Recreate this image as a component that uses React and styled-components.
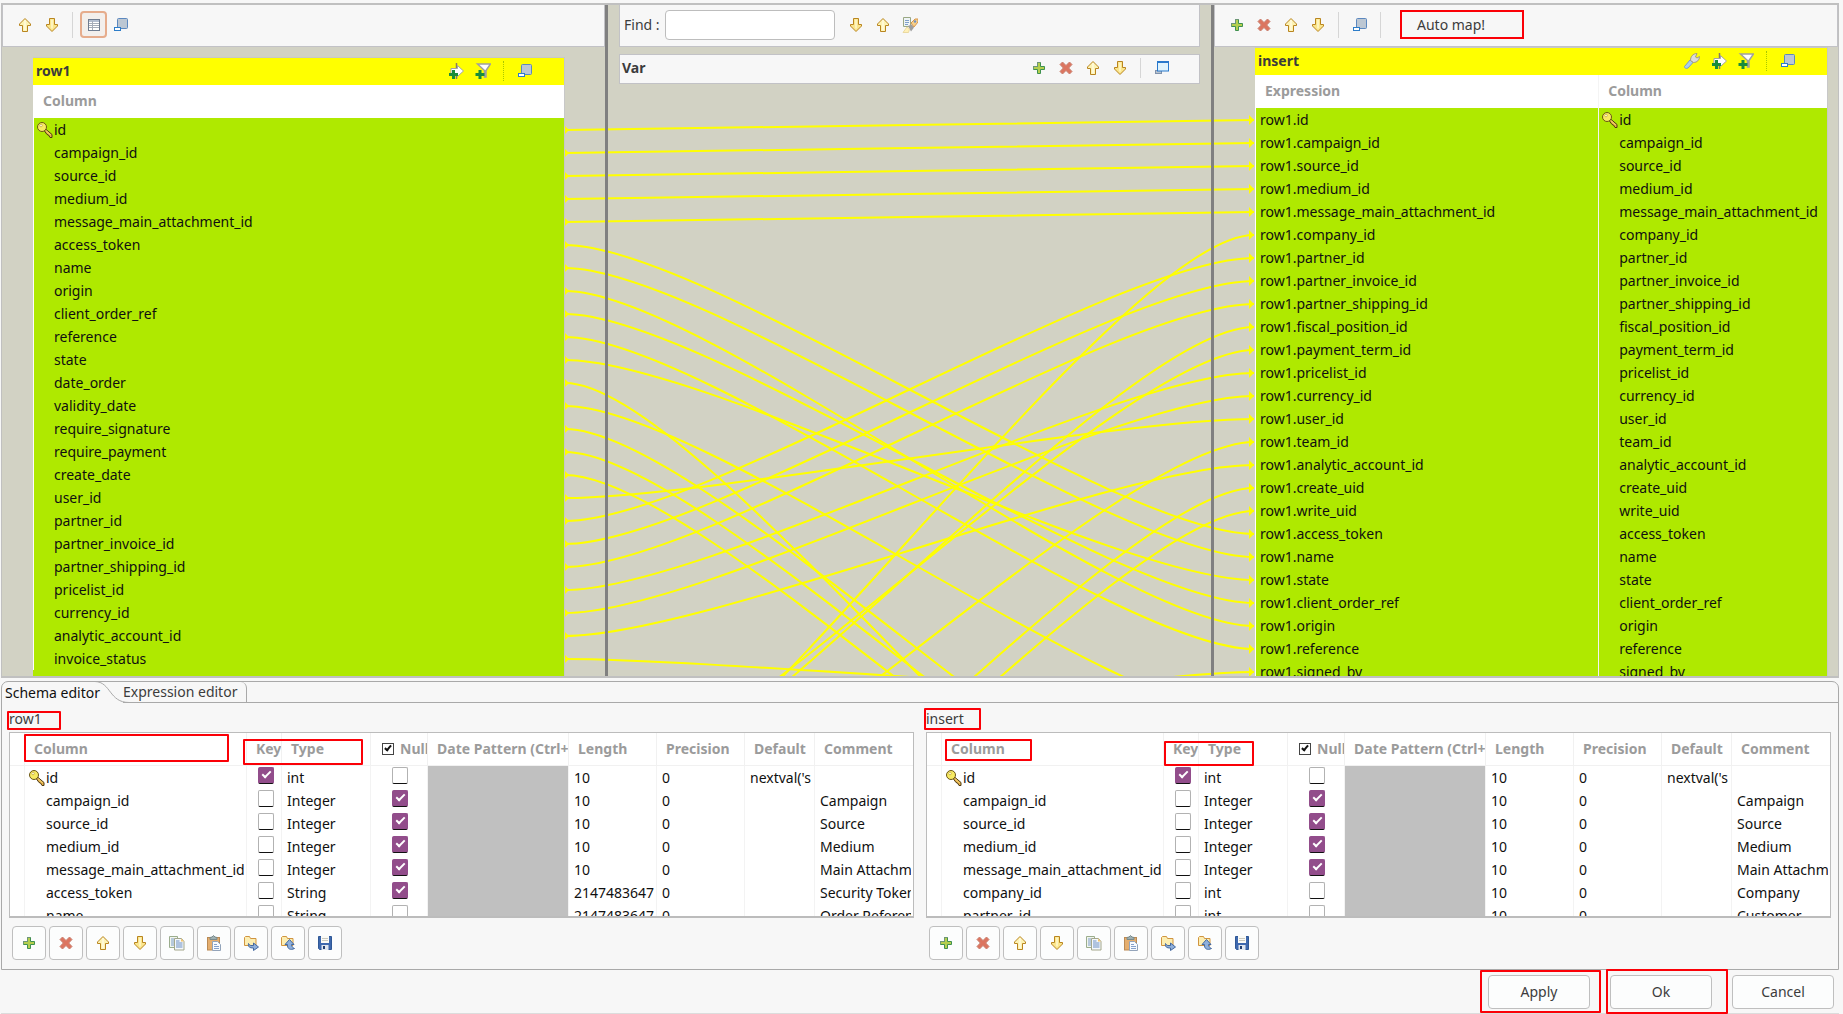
import React from "react";
import styled, { createGlobalStyle, css } from "styled-components";

const GlobalStyle = createGlobalStyle`
  *, *::before, *::after { box-sizing: border-box; }
  body {
    margin: 0;
    background: #f7f7f7;
    color: #3c3c3c;
    font: 14px/20px "Noto Sans", "Open Sans", sans-serif;
  }
  button, input { font: inherit; color: inherit; margin: 0; }
  table { border-collapse: separate; border-spacing: 0; }
`;

/* ---------- data ---------- */

const sourceColumns = [
  "id", "campaign_id", "source_id", "medium_id", "message_main_attachment_id",
  "access_token", "name", "origin", "client_order_ref", "reference", "state",
  "date_order", "validity_date", "require_signature", "require_payment",
  "create_date", "user_id", "partner_id", "partner_invoice_id",
  "partner_shipping_id", "pricelist_id", "currency_id", "analytic_account_id",
  "invoice_status",
];

const targetColumns = [
  "id", "campaign_id", "source_id", "medium_id", "message_main_attachment_id",
  "company_id", "partner_id", "partner_invoice_id", "partner_shipping_id",
  "fiscal_position_id", "payment_term_id", "pricelist_id", "currency_id",
  "user_id", "team_id", "analytic_account_id", "create_uid", "write_uid",
  "access_token", "name", "state", "client_order_ref", "origin", "reference",
  "signed_by",
];

/* [source row, target row] */
const links = [
  [0, 0], [1, 1], [2, 2], [3, 3], [4, 4], [5, 18], [6, 19], [7, 22], [8, 21],
  [9, 23], [10, 20], [11, 36], [12, 26], [13, 32], [14, 33], [15, 34],
  [16, 13], [17, 6], [18, 7], [19, 8], [20, 11], [21, 12], [22, 15], [23, 25],
  [31, 5], [30, 9], [29, 10], [32, 14], [37, 16], [38, 17], [27, 24],
];

const leftSchema = [
  { name: "id", pk: true, type: "int", nullable: false, length: "10", def: "nextval('s", comment: "" },
  { name: "campaign_id", type: "Integer", nullable: true, length: "10", comment: "Campaign" },
  { name: "source_id", type: "Integer", nullable: true, length: "10", comment: "Source" },
  { name: "medium_id", type: "Integer", nullable: true, length: "10", comment: "Medium" },
  { name: "message_main_attachment_id", type: "Integer", nullable: true, length: "10", comment: "Main Attachment" },
  { name: "access_token", type: "String", nullable: true, length: "2147483647", comment: "Security Token" },
  { name: "name", type: "String", nullable: false, length: "2147483647", comment: "Order Reference" },
];

const rightSchema = [
  ...leftSchema.slice(0, 5),
  { name: "company_id", type: "int", nullable: false, length: "10", comment: "Company" },
  { name: "partner_id", type: "int", nullable: false, length: "10", comment: "Customer" },
];

/* ---------- icons ---------- */

const Svg = styled.svg`
  display: block;
  width: 16px;
  height: 16px;
  flex: none;
`;

const Icon = ({ children }) => (
  <Svg viewBox="0 0 16 16" aria-hidden="true">{children}</Svg>
);

const UpIcon = () => (
  <Icon>
    <path d="M8 1.5 13.5 7v1.5h-3v6h-5v-6h-3V7z" fill="#fdf3b4" stroke="#b9851f" strokeLinejoin="round" />
    <path d="M8 3v10.5" stroke="#fffbe0" strokeWidth="1.5" />
  </Icon>
);
const DownIcon = () => (
  <Icon>
    <path d="M8 14.5 13.5 9V7.500h-3v-6h-5v6h-3V9z" fill="#fbe68c" stroke="#b9851f" strokeLinejoin="round" />
    <path d="M8 2.500v9" stroke="#fff8cf" strokeWidth="1.5" />
  </Icon>
);
const AddIcon = () => (
  <Icon>
    <path d="M6.500 2.500h3v4h4v3h-4v4h-3v-4h-4v-3h4z" fill="#b5cf4e" stroke="#3f9150" />
    <path d="M2.500 9v-2.500h4v-4h3" fill="none" stroke="#6f9578" />
  </Icon>
);
const DeleteIcon = () => (
  <Icon>
    <path d="M4.500 2 8 5.500 11.500 2 14 4.500 10.700 8 14 11.500 11.500 14 8 10.500 4.500 14 2 11.500 5.300 8 2 4.500z" fill="#dc7560" stroke="#c9806f" strokeLinejoin="round" />
  </Icon>
);
const RestoreIcon = () => (
  <Icon>
    <rect x="4.500" y="1.500" width="10" height="10" rx="1" fill="#bcc7d3" stroke="#5c88bf" />
    <rect x="1.500" y="10.500" width="6" height="3" fill="#fff" stroke="#2d7dc9" />
  </Icon>
);
const MaximizeIcon = () => (
  <Icon>
    <rect x="1.500" y="10.500" width="6" height="3" fill="#b9c3cf" stroke="#8192ab" />
    <rect x="3.500" y="1.500" width="11" height="9.500" fill="#dff3fd" stroke="#2878cc" />
    <path d="M4 2.500h10" stroke="#2878cc" />
  </Icon>
);
const GridIcon = () => (
  <Icon>
    <rect x="2.500" y="2.500" width="11" height="11" fill="#fff" stroke="#6f7c90" />
    <path d="M3 4h10" stroke="#9aa9c0" strokeWidth="1.500" />
    <path d="M3 6.500h10M3 8.500h10M3 10.500h10M6.500 4v9" stroke="#a6adb8" />
  </Icon>
);
const FindIcon = () => (
  <Icon>
    <path d="M1.500 .5v9h7v-9z" fill="#eef4f6" stroke="#9aa884" />
    <path d="M3 3.500h4M3 5.500h4M3 7.500h3" stroke="#7fa0cb" />
    <path d="m9 6 4-4h3v3l-4 5z" fill="#f7d08a" stroke="#d9974a" />
    <circle cx="13" cy="4.500" r="1.200" fill="#6f8fc0" />
    <path d="m6 9 3.500-1.500 2.500 3-3 4z" fill="#9e9e9e" />
    <path d="M1 15.500 5 10l2.500 2-1 3.500z" fill="#fff0b8" stroke="#ead9a0" />
  </Icon>
);
const AddArrowIcon = () => (
  <Icon>
    <path d="M8.500 0v16" stroke="#8a7a62" strokeWidth="1.500" />
    <path d="M3 5.500h6.500V2.500L15.500 8 9.500 13.500V11H3z" fill="#fff" stroke="#a3a3a3" />
    <path d="M5.500 7v9M1 11.500h9" stroke="#1a8c3c" strokeWidth="3" />
  </Icon>
);
const FilterIcon = () => (
  <Icon>
    <path d="M2.500 1h13l-4.500 6.500V14H9.500V7.500z" fill="#fff" stroke="#a0a0a0" strokeWidth="1.500" />
    <path d="M5 7v9M.5 11.500h9" stroke="#1a8c3c" strokeWidth="3" />
  </Icon>
);
const WrenchIcon = () => (
  <Icon>
    <path d="m.5 13.500 5.500-6.500 3 2.500-5 5.500c-1.500 1-4 0-3.500-1.500z" fill="#a9cdee" stroke="#7d9cc0" />
    <path d="M6.500 7.500C6.500 3.500 9 .5 13 .5L11.500 4l1.500 1 2.500-1.500C15.500 7 13 9.500 9.500 9.500z" fill="#dcdcdc" stroke="#a19a80" />
  </Icon>
);
const KeyIcon = () => (
  <Icon>
    <path d="M8.500 7 15 12.500V15.500h-2l-1.500-2.500-1.500-.5-2.500-3.500z" fill="#e8b04a" stroke="#4c3a12" />
    <path d="m9 8.500 4.500 4.500" stroke="#f7dd7c" />
    <circle cx="5" cy="5" r="4.500" fill="#f7ea62" stroke="#6b5514" />
    <circle cx="4" cy="3.500" r="1.300" fill="#fffbe0" stroke="#b89a2a" strokeWidth="0.600" />
  </Icon>
);
const CopyIcon = () => (
  <Icon>
    <path d="M.5 1.500h8v11h-8z" fill="#f1f6ee" stroke="#9bad8d" />
    <path d="M2 4h3M2 6h3M2 8h3M2 10h3" stroke="#7d9cc9" />
    <path d="M5.500 3.500h7l2.500 3v8.500H5.500z" fill="#f4f8fc" stroke="#a3a78c" />
    <path d="M12 3.500v3h3z" fill="#f3c36b" />
    <path d="M7 8h6.500M7 10h6.500M7 12h6.500M7 6h3.500" stroke="#6b8ec2" />
  </Icon>
);
const PasteIcon = () => (
  <Icon>
    <rect x="1.500" y="2.500" width="12" height="12.500" fill="#e5ae6e" stroke="#ba8a54" />
    <path d="M4 4.500V2.500l2-.5L7.500.5 9 2l2 .5v2z" fill="#9eb0b2" stroke="#798a8c" />
    <path d="M6.500 6.500h5l3 3v6h-8z" fill="#f7fafd" stroke="#93a4ba" />
    <path d="M8 9.500h3M8 11.500h5M8 13.500h5" stroke="#84a0cb" />
  </Icon>
);
const FolderShape = () => (
  <path d="M1.500 10.500v-8l1-1h4l1 2h5.500v7z" fill="#fceeb2" stroke="#d09540" strokeLinejoin="round" />
);
const ImportIcon = () => (
  <Icon>
    <FolderShape />
    <path d="M5.500 8.500c1 2.500 3 2 5 2V8l5 4-5 3.500V13c-4 0-5.500-1-5-4.500z" fill="#8fb0dc" stroke="#44699f" />
  </Icon>
);
const ExportIcon = () => (
  <Icon>
    <FolderShape />
    <path d="m9.500 4.500 4.500 5h-2.500c0 2 1 3 3 4-4 2-7.500.5-7-4H5z" fill="#8fb0dc" stroke="#44699f" />
  </Icon>
);
const SaveIcon = () => (
  <Icon>
    <path d="M1.500 1.500h13v13h-12l-1-1z" fill="#3d68ae" stroke="#2f5896" />
    <rect x="4" y="1" width="8" height="7" fill="#fbfbf6" />
    <path d="M5 3.500h6M5 5.500h6" stroke="#c9c9c0" />
    <rect x="4.500" y="10" width="7" height="5" fill="#dfe6ef" />
    <rect x="6" y="11" width="2" height="3" fill="#1f3d70" />
  </Icon>
);

/* ---------- shared parts ---------- */

const IconButton = styled.button`
  display: flex;
  align-items: center;
  justify-content: center;
  width: 27px;
  height: 27px;
  padding: 0;
  border: 0;
  border-radius: 4px;
  background: transparent;
  ${(p) => p.$pressed && css`
    border: 2px solid #e6ac8c;
    background: #f3efec;
  `}
`;

const Separator = styled.span`
  width: 1px;
  height: ${(p) => (p.$short ? 20 : 26)}px;
  margin: 0 7px;
  border-left: 1px ${(p) => (p.$dotted ? "dotted #a8c800" : "solid #d6d6d6")};
`;

const Marked = styled.span`
  position: absolute;
  border: 2px solid #fb0007;
  border-radius: 1px;
  pointer-events: none;
  z-index: 2;
  top: ${(p) => p.$top}px;
  left: ${(p) => p.$left}px;
  width: ${(p) => p.$width}px;
  height: ${(p) => p.$height}px;
`;

/* ---------- mapper ---------- */

const Window = styled.main`
  display: flex;
  flex-direction: column;
  height: 100vh;
  min-height: 600px;
  padding: 3px 4px 0 1px;
  overflow: hidden;
`;

const Mapper = styled.section`
  position: relative;
  display: grid;
  grid-template-columns: 603fr 3px 603fr 3px 624fr;
  grid-template-rows: 100%;
  flex: 1;
  min-height: 0;
  overflow: hidden;
  border: 2px solid #c0c0c0;
  border-left-width: 1px;
  border-right-width: 1px;
  background: #d2d2c4;
`;

const Pane = styled.div`
  display: flex;
  flex-direction: column;
  min-width: 0;
  padding: 0 ${(p) => p.$gutter || 0}px;
`;

const Sash = styled.div`
  background: #808080;
  z-index: 1;
`;

const Toolbar = styled.div`
  display: flex;
  flex: none;
  align-items: center;
  height: 42px;
  padding: 0 ${(p) => (p.$tight ? 4 : 8)}px 2px;
  border: 1px solid #c2c2c6;
  border-top: 0;
  background: #f7f7f7;
`;

const FindInput = styled.input`
  width: 170px;
  height: 30px;
  margin: 0 8px 0 5px;
  padding: 0 6px;
  border: 1px solid #bdbdbd;
  border-radius: 4px;
  background: #fff;
`;

const AutoMap = styled.button`
  width: 124px;
  height: 29px;
  margin-left: 12px;
  padding: 0 0 0 15px;
  border: 2px solid #fb0007;
  background: transparent;
  text-align: left;
`;

const VarBar = styled.div`
  display: flex;
  flex: none;
  align-items: center;
  height: 30px;
  margin-top: 7px;
  padding: 0 24px 2px 2px;
  border: 1px solid #c2c2c6;
  background: #f7f7f7;
`;

const Title = styled.h2`
  flex: 1;
  margin: 0;
  font-size: 14px;
  line-height: 20px;
  font-weight: 700;
`;

const MapCard = styled.article`
  flex: 1 0 auto;
  margin: ${(p) => (p.$target ? "0 10px 0 41px" : "10px 40px 0 31px")};
  border: 1px solid #c8c8c8;
  border-width: 1px 1px 0 0;
  background: #afe900;
`;

const CardBar = styled.header`
  display: flex;
  align-items: center;
  height: 27px;
  padding: 0 26px 2px 3px;
  background: #ffff00;
`;

const MapTable = styled.table`
  width: 100%;
  table-layout: fixed;
  color: #101010;

  col:first-child { width: ${(p) => (p.$target ? "60%" : "100%")}; }
  th {
    height: 33px;
    padding: 0 9px 2px;
    background: #fff;
    color: #9b9b9b;
    font-weight: 700;
    text-align: left;
  }
  td {
    height: 23px;
    padding: 0;
    white-space: nowrap;
    overflow: hidden;
  }
  tr > :first-child { border-left: 1px solid #fff; }
  td + td, th + th { border-left: 1px solid #f4f4f4; }
`;

const Cell = styled.div`
  display: flex;
  align-items: center;
  height: 23px;
  padding-left: ${(p) => p.$pad}px;
  overflow: hidden;
  white-space: nowrap;
`;

const KeySlot = styled.span`
  flex: none;
  width: 17px;
`;

const Wires = styled.svg`
  position: absolute;
  top: 0;
  left: calc((100% - 6px) * 603 / 1830 - 40px);
  width: calc((100% - 6px) * 603 / 1830 + 86px);
  height: 1000px;
  pointer-events: none;
`;

const ROW = 23;
const SPAN = 689;

function WireLayer() {
  return (
    <Wires viewBox={`0 0 ${SPAN} 1000`} preserveAspectRatio="none" aria-hidden="true">
      {links.map(([from, to]) => {
        const y1 = 125 + from * ROW;
        const y2 = 115 + to * ROW;
        const bend = SPAN * 0.2;
        return (
          <g key={`${from}-${to}`}>
            <path
              d={`M0 ${y1}C${bend} ${y1} ${SPAN - bend} ${y2} ${SPAN} ${y2}`}
              fill="none"
              stroke="#ffff00"
              strokeWidth="2"
              vectorEffect="non-scaling-stroke"
            />
            <path d={`M0 ${y1 - 4}l4 4-4 4z`} fill="#ffff00" />
            <path d={`M${SPAN - 5} ${y2 - 5}l5 5-5 5z`} fill="#ffff00" />
          </g>
        );
      })}
    </Wires>
  );
}

/* ---------- schema editor ---------- */

const Folder = styled.section`
  margin-top: 3px;
  padding-bottom: 9px;
  border: 1px solid #a9a9a9;
  border-radius: 7px 7px 0 0;
`;

const TabStrip = styled.div`
  display: flex;
  height: 21px;
`;

const Tab = styled.button`
  padding: 0 ${(p) => (p.$active ? 0 : 4)}px 0 ${(p) => (p.$active ? 3 : 0)}px;
  width: ${(p) => (p.$active ? 93 : 124)}px;
  border: 0 solid #a9a9a9;
  border-width: ${(p) => (p.$active ? "0" : "0 1px 1px 0")};
  border-top-right-radius: ${(p) => (p.$active ? 0 : 6)}px;
  background: transparent;
  color: ${(p) => (p.$active ? "#101010" : "#3c3c3c")};
  text-align: left;
  white-space: nowrap;
  overflow: visible;
  z-index: 1;
`;

const TabCurve = styled.svg`
  flex: none;
  width: 28px;
  height: 21px;
  overflow: visible;
`;

const TabFill = styled.div`
  flex: 1;
  border-bottom: 1px solid #a9a9a9;
`;

const Editors = styled.div`
  display: grid;
  grid-template-columns: 1fr 1fr;
  gap: 12px;
  padding: 0 7px;
`;

const Editor = styled.div`
  position: relative;
  min-width: 0;
`;

const EditorName = styled.div`
  height: 29px;
  line-height: 31px;
`;

const Viewport = styled.div`
  height: 186px;
  overflow: hidden;
  border: 1px solid #bcbcbc;
  border-bottom-width: 2px;
  background: #fff;
`;

const SchemaTable = styled.table`
  width: 100%;
  table-layout: fixed;
  color: #101010;

  th {
    height: 33px;
    padding: 0 0 0 9px;
    border-right: 1px solid #f1f1f1;
    border-bottom: 1px solid #f1f1f1;
    color: #9b9b9b;
    font-weight: 700;
    text-align: left;
    white-space: nowrap;
    overflow: hidden;
  }
  td {
    height: 23px;
    padding: 0 2px 0 0;
    border-right: 1px solid #f3f3f3;
    overflow: hidden;
  }
  tr > :last-child { border-right: 0; }
`;

const DateCell = styled.td`
  background: #c0c0c0;
`;

const HeadCheck = styled.input`
  appearance: none;
  position: relative;
  width: 12px;
  height: 12px;
  margin: 0 6px 0 2px;
  border: 1px solid #444;
  background: #fff;
  vertical-align: -1px;

  &::after {
    content: "";
    position: absolute;
    left: 3px;
    top: 0;
    width: 4px;
    height: 7px;
    border: solid #111;
    border-width: 0 2px 2px 0;
    transform: rotate(40deg);
  }
`;

const Check = styled.input`
  appearance: none;
  position: relative;
  display: block;
  width: 16px;
  height: 17px;
  margin: -4px 0 0 ${(p) => p.$indent}px;
  border: 1px solid #b2b2b2;
  border-bottom-color: #111;
  border-radius: 2px;
  background: #fff;

  &:checked {
    border-color: #924d8b;
    border-bottom-color: #111;
    background: #924d8b;
  }
  &:checked::after {
    content: "";
    position: absolute;
    left: 3px;
    top: 3px;
    width: 9px;
    height: 5px;
    border: solid #fff;
    border-width: 0 0 2px 2px;
    transform: rotate(-45deg);
  }
`;

const Actions = styled.div`
  display: flex;
  gap: 3px;
  padding: 8px 0 0 3px;
`;

const ActionButton = styled.button`
  display: flex;
  align-items: center;
  justify-content: center;
  width: 34px;
  height: 34px;
  padding: 0;
  border: 1px solid #bfbfbf;
  border-radius: 4px;
  background: #fcfdfd;
`;

const actions = [
  ["Add", AddIcon], ["Remove", DeleteIcon], ["Move up", UpIcon], ["Move down", DownIcon],
  ["Copy", CopyIcon], ["Paste", PasteIcon], ["Import", ImportIcon], ["Export", ExportIcon],
  ["Save", SaveIcon],
];

const widths = [15, 222, 35, 89, 57, 141, 88, 88, 70];

function SchemaEditor({ name, rows, marks }) {
  return (
    <Editor>
      {marks.map((m) => (
        <Marked key={m.join()} $left={m[0]} $top={m[1]} $width={m[2]} $height={m[3]} />
      ))}
      <EditorName>{name}</EditorName>
      <Viewport>
        <SchemaTable aria-label={`${name} schema`}>
          <colgroup>
            {widths.map((w, i) => <col key={i} width={w} />)}
            <col />
          </colgroup>
          <thead>
            <tr>
              <th aria-hidden="true" />
              <th>Column</th>
              <th>Key</th>
              <th>Type</th>
              <th>
                <label>
                  <HeadCheck type="checkbox" defaultChecked />
                  Null
                </label>
              </th>
              <th>Date Pattern (Ctrl+</th>
              <th>Length</th>
              <th>Precision</th>
              <th>Default</th>
              <th>Comment</th>
            </tr>
          </thead>
          <tbody>
            {rows.map((r) => (
              <tr key={r.name}>
                <td />
                <td>
                  <Cell $pad={4}>
                    <KeySlot>{r.pk && <KeyIcon />}</KeySlot>
                    {r.name}
                  </Cell>
                </td>
                <td><Check type="checkbox" aria-label={`${r.name} key`} defaultChecked={!!r.pk} $indent={11} /></td>
                <td><Cell $pad={5}>{r.type}</Cell></td>
                <td><Check type="checkbox" aria-label={`${r.name} nullable`} defaultChecked={r.nullable} $indent={21} /></td>
                <DateCell />
                <td><Cell $pad={5}>{r.length}</Cell></td>
                <td><Cell $pad={5}>0</Cell></td>
                <td><Cell $pad={5}>{r.def}</Cell></td>
                <td><Cell $pad={5}>{r.comment}</Cell></td>
              </tr>
            ))}
          </tbody>
        </SchemaTable>
      </Viewport>
      <Actions>
        {actions.map(([label, Glyph]) => (
          <ActionButton key={label} type="button" aria-label={label}><Glyph /></ActionButton>
        ))}
      </Actions>
    </Editor>
  );
}

/* ---------- footer ---------- */

const Footer = styled.footer`
  display: flex;
  justify-content: flex-end;
  gap: 20px;
  height: 44px;
  padding: 5px 5px 0;
  border-bottom: 1px solid #dcdcdc;
`;

const ButtonWrap = styled.div`
  position: relative;
`;

const DialogButton = styled.button`
  width: 102px;
  height: 34px;
  border: 1px solid #bfbfbf;
  border-radius: 4px;
  background: #fcfdfd;
`;

const Tool = ({ label, pressed, children }) => (
  <IconButton type="button" aria-label={label} $pressed={pressed}>{children}</IconButton>
);

export default function App() {
  return (
    <>
      <GlobalStyle />
      <Window>
        <Mapper>
          <Pane>
            <Toolbar>
              <Tool label="Move up"><UpIcon /></Tool>
              <Tool label="Move down"><DownIcon /></Tool>
              <Separator />
              <Tool label="Show columns" pressed><GridIcon /></Tool>
              <Tool label="Minimize all"><RestoreIcon /></Tool>
            </Toolbar>
            <MapCard>
              <CardBar>
                <Title>row1</Title>
                <Tool label="Add expression"><AddArrowIcon /></Tool>
                <Tool label="Add filter"><FilterIcon /></Tool>
                <Separator $dotted $short />
                <Tool label="Minimize row1"><RestoreIcon /></Tool>
              </CardBar>
              <MapTable>
                <colgroup><col /></colgroup>
                <thead><tr><th>Column</th></tr></thead>
                <tbody>
                  {sourceColumns.map((c, i) => (
                    <tr key={c}>
                      <td>
                        <Cell $pad={3}>
                          <KeySlot>{i === 0 && <KeyIcon />}</KeySlot>
                          {c}
                        </Cell>
                      </td>
                    </tr>
                  ))}
                </tbody>
              </MapTable>
            </MapCard>
          </Pane>
          <Sash />
          <Pane $gutter={11}>
            <Toolbar $tight>
              <label htmlFor="find">Find :</label>
              <FindInput id="find" type="text" />
              <Tool label="Find next"><DownIcon /></Tool>
              <Tool label="Find previous"><UpIcon /></Tool>
              <Tool label="Highlight all"><FindIcon /></Tool>
            </Toolbar>
            <VarBar>
              <Title>Var</Title>
              <Tool label="Add variable"><AddIcon /></Tool>
              <Tool label="Remove variable"><DeleteIcon /></Tool>
              <Tool label="Move up"><UpIcon /></Tool>
              <Tool label="Move down"><DownIcon /></Tool>
              <Separator $short />
              <Tool label="Maximize"><MaximizeIcon /></Tool>
            </VarBar>
          </Pane>
          <Sash />
          <Pane>
            <Toolbar>
              <Tool label="Add output"><AddIcon /></Tool>
              <Tool label="Remove output"><DeleteIcon /></Tool>
              <Tool label="Move up"><UpIcon /></Tool>
              <Tool label="Move down"><DownIcon /></Tool>
              <Separator />
              <Tool label="Minimize all"><RestoreIcon /></Tool>
              <Separator />
              <AutoMap type="button">Auto map!</AutoMap>
            </Toolbar>
            <MapCard $target>
              <CardBar>
                <Title>insert</Title>
                <Tool label="Settings"><WrenchIcon /></Tool>
                <Tool label="Add expression"><AddArrowIcon /></Tool>
                <Tool label="Add filter"><FilterIcon /></Tool>
                <Separator $dotted $short />
                <Tool label="Minimize insert"><RestoreIcon /></Tool>
              </CardBar>
              <MapTable $target>
                <colgroup><col /><col /></colgroup>
                <thead><tr><th>Expression</th><th>Column</th></tr></thead>
                <tbody>
                  {targetColumns.map((c, i) => (
                    <tr key={c}>
                      <td><Cell $pad={4}>{`row1.${c}`}</Cell></td>
                      <td>
                        <Cell $pad={3}>
                          <KeySlot>{i === 0 && <KeyIcon />}</KeySlot>
                          {c}
                        </Cell>
                      </td>
                    </tr>
                  ))}
                </tbody>
              </MapTable>
            </MapCard>
          </Pane>
          <WireLayer />
        </Mapper>

        <Folder>
          <TabStrip>
            <Tab type="button" $active>Schema editor</Tab>
            <TabCurve viewBox="0 0 28 21" aria-hidden="true">
              <path d="M0-.5C16 0 14 20.500 34 20.500" fill="none" stroke="#a9a9a9" />
            </TabCurve>
            <Tab type="button">Expression editor</Tab>
            <TabFill />
          </TabStrip>
          <Editors>
            <SchemaEditor
              name="row1"
              rows={leftSchema}
              marks={[[-2, 8, 54, 19], [15, 31, 205, 28], [234, 36, 120, 26]]}
            />
            <SchemaEditor
              name="insert"
              rows={rightSchema}
              marks={[[-2, 5, 57, 22], [19, 36, 87, 22], [238, 38, 90, 25]]}
            />
          </Editors>
        </Folder>

        <Footer>
          <ButtonWrap>
            <Marked $left={-8} $top={-5} $width={121} $height={43} />
            <DialogButton type="button">Apply</DialogButton>
          </ButtonWrap>
          <ButtonWrap>
            <Marked $left={-4} $top={-6} $width={122} $height={45} />
            <DialogButton type="button">Ok</DialogButton>
          </ButtonWrap>
          <DialogButton type="button">Cancel</DialogButton>
        </Footer>
      </Window>
    </>
  );
}
